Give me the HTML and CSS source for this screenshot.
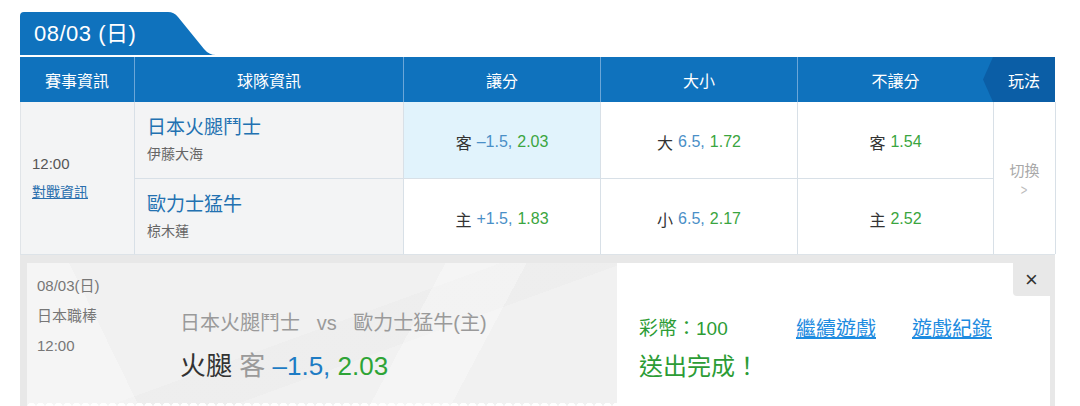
FILE: index.html
```html
<!DOCTYPE html>
<html lang="zh-Hant">
<head>
    <meta charset="UTF-8">
    <title>賽事投注</title>
    <link rel="stylesheet" href="styles.css">
</head>
<body>
    <div class="board">
        <div class="date-tab">08/03 (日)</div>

        <div class="head cols">
            <div class="head-cell">賽事資訊</div>
            <div class="head-cell">球隊資訊</div>
            <div class="head-cell">讓分</div>
            <div class="head-cell">大小</div>
            <div class="head-cell">不讓分</div>
            <div class="head-cell play">玩法</div>
        </div>

        <div class="match cols">
            <div class="info">
                <div class="time">12:00</div>
                <a class="info-link" href="#">對戰資訊</a>
            </div>
            <div class="team top">
                <div class="team-name">日本火腿鬥士</div>
                <div class="pitcher">伊藤大海</div>
            </div>
            <div class="odds top active">客 <span class="line">–1.5,</span> <span class="rate">2.03</span></div>
            <div class="odds top">大 <span class="line">6.5,</span> <span class="rate">1.72</span></div>
            <div class="odds top">客 <span class="rate">1.54</span></div>
            <div class="switch">
                <span>切換</span>
                <span class="arrow">&gt;</span>
            </div>
            <div class="team">
                <div class="team-name">歐力士猛牛</div>
                <div class="pitcher">椋木蓮</div>
            </div>
            <div class="odds">主 <span class="line">+1.5,</span> <span class="rate">1.83</span></div>
            <div class="odds">小 <span class="line">6.5,</span> <span class="rate">2.17</span></div>
            <div class="odds">主 <span class="rate">2.52</span></div>
        </div>

        <div class="bet-panel">
            <div class="ticket">
                <div class="ticket-main">
                    <div class="meta">
                        <div>08/03(日)</div>
                        <div>日本職棒</div>
                        <div>12:00</div>
                    </div>
                    <div class="detail">
                        <div class="versus">日本火腿鬥士&nbsp;&nbsp; vs &nbsp;&nbsp;歐力士猛牛(主)</div>
                        <div class="pick">火腿 <span class="side">客</span> <span class="line">–1.5,</span> <span class="rate">2.03</span></div>
                    </div>
                </div>
                <div class="ticket-result">
                    <div class="close-btn">×</div>
                    <div class="result-row">
                        <div class="coins">彩幣：100</div>
                        <a class="result-link" href="#">繼續遊戲</a>
                        <a class="result-link" href="#">遊戲紀錄</a>
                    </div>
                    <div class="done">送出完成！</div>
                </div>
            </div>
        </div>
    </div>
</body>
</html>
```

FILE: styles.css
```css
body {
    margin: 0;
    padding: 12px 25px 0 20px;
    font-family: "Liberation Sans", "Noto Sans CJK TC", sans-serif;
    color: #333;
    background: #fff;
    overflow: hidden;
}
.board {
    width: 1035px;
}
.date-tab {
    width: 196px;
    height: 43px;
    box-sizing: border-box;
    padding-left: 14px;
    line-height: 43px;
    font-size: 22px;
    letter-spacing: 0.5px;
    color: #fff;
    background: #0f72bd;
    clip-path: path('M0,43 L0,4 Q0,0 4,0 L148,0 Q154,0 158,5 L184,37 Q189,43 196,43 Z');
    margin-bottom: 2px;
}
.cols {
    display: grid;
    grid-template-columns: 114px 269px 197px 197px 196px 62px;
}
.head {
    height: 45px;
    background: #0f72bd;
    color: #fff;
    font-size: 16px;
}
.head-cell {
    display: flex;
    align-items: center;
    justify-content: center;
    border-left: 1px solid #6ba6d8;
}
.head-cell:first-child {
    border-left: none;
}
.head-cell.play {
    position: relative;
    background: #0b5ea6;
    border-left: none;
}
.head-cell.play::before {
    content: "";
    position: absolute;
    left: -10px;
    top: 0;
    width: 10px;
    height: 100%;
    background: #0b5ea6;
    clip-path: polygon(100% 0, 0 50%, 100% 100%);
}
.match {
    grid-template-rows: 77px 75px;
    border-left: 1px solid #e0e4e8;
    border-bottom: 1px solid #dde3e8;
}
.match > div {
    border-right: 1px solid #d8e0e7;
    box-sizing: border-box;
}
.info {
    grid-row: 1 / 3;
    display: flex;
    flex-direction: column;
    justify-content: center;
    padding-left: 11px;
    background: #f3f4f5;
}
.time {
    font-size: 15px;
    line-height: 20px;
    color: #555;
}
.info-link {
    margin-top: 8px;
    font-size: 14px;
    line-height: 20px;
    color: #2a6fae;
}
.team {
    display: flex;
    flex-direction: column;
    justify-content: center;
    padding-left: 12px;
    background: #f3f4f5;
}
.top {
    border-bottom: 1px solid #d8e0e7;
}
.team-name {
    font-size: 19px;
    line-height: 24px;
    color: #2271b1;
}
.pitcher {
    margin-top: 4px;
    font-size: 14px;
    line-height: 20px;
    color: #666;
}
.odds {
    display: flex;
    align-items: center;
    justify-content: center;
    gap: 5px;
    padding-top: 4px;
    font-size: 16px;
    color: #333;
    background: #fff;
}
.odds.active {
    background: #e1f3fc;
}
.line {
    color: #4a8fc7;
}
.rate {
    color: #3aa540;
}
.switch {
    grid-column: 6;
    grid-row: 1 / 3;
    display: flex;
    flex-direction: column;
    align-items: center;
    justify-content: center;
    font-size: 15px;
    color: #a8a8a8;
    background: #fff;
}
.switch .arrow {
    margin-top: 2px;
    font-size: 14px;
    color: #bbb;
    transform: scaleX(0.8);
}
.bet-panel {
    height: 160px;
    padding: 8px 5px 0 7px;
    background: #e8e8e8;
}
.ticket {
    display: flex;
    height: 100%;
}
.ticket-main {
    position: relative;
    display: flex;
    width: 590px;
    background:
        linear-gradient(118deg, transparent 0 62%, rgba(255,255,255,.3) 62% 74%, transparent 74%),
        linear-gradient(64deg, rgba(255,255,255,.3) 0 18%, transparent 18% 100%),
        linear-gradient(160deg, transparent 0 46%, rgba(232,232,232,.35) 46% 58%, transparent 58%),
        #f1f1f1;
}
.ticket-main::after {
    content: "";
    position: absolute;
    left: 0;
    right: 0;
    top: 138px;
    bottom: 0;
    background:
        radial-gradient(circle at 50% 100%, #fff 4px, transparent 4.5px) 0 0 / 9px 6px repeat-x,
        linear-gradient(#fff, #fff) 0 6px / 100% 100% no-repeat;
}
.meta {
    width: 153px;
    flex-shrink: 0;
    box-sizing: border-box;
    padding: 8px 0 0 10px;
    font-size: 15px;
    line-height: 30px;
    color: #777;
}
.detail {
    padding-top: 45px;
}
.versus {
    font-size: 20px;
    line-height: 30px;
    color: #9a9a9a;
}
.pick {
    margin-top: 10px;
    font-size: 26px;
    line-height: 36px;
    color: #333;
}
.pick .side {
    color: #9a9a9a;
}
.pick .line {
    color: #1e7cc4;
}
.pick .rate {
    color: #2ea436;
}
.ticket-result {
    position: relative;
    flex: 1;
    padding: 52px 0 0 22px;
    background: #fff;
}
.close-btn {
    position: absolute;
    top: 0;
    right: 0;
    width: 37px;
    height: 33px;
    line-height: 33px;
    text-align: center;
    font-size: 22px;
    color: #333;
    background: #e8e8e8;
    border-bottom-left-radius: 4px;
}
.result-row {
    display: flex;
    align-items: center;
    line-height: 28px;
}
.coins {
    width: 157px;
    font-size: 19px;
    color: #2c9c35;
}
.result-link {
    margin-right: 36px;
    font-size: 20px;
    color: #1d8be0;
}
.done {
    margin-top: 7px;
    font-size: 24px;
    line-height: 34px;
    color: #2c9c35;
}
```
